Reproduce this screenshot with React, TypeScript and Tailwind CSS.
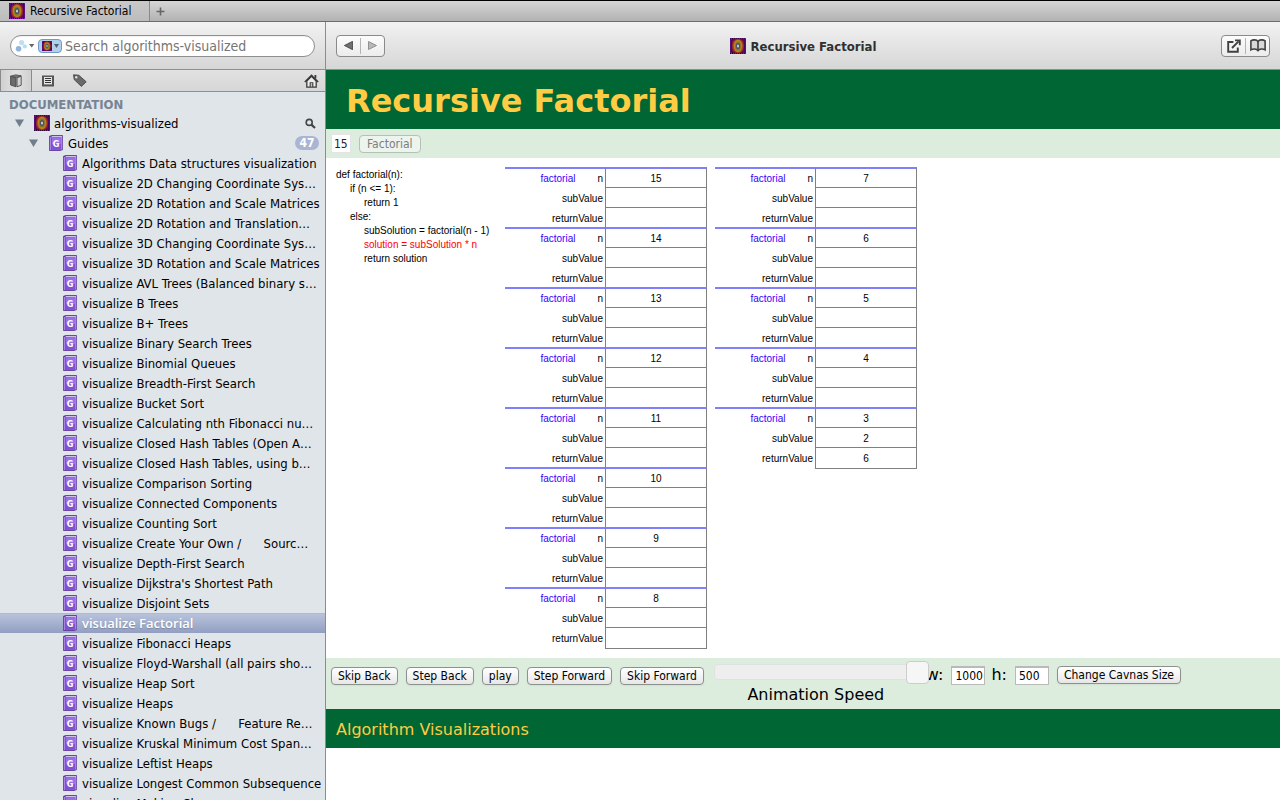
import React from "react";

const guides = [
  "Algorithms Data structures visualization",
  "visualize 2D Changing Coordinate Sys…",
  "visualize 2D Rotation and Scale Matrices",
  "visualize 2D Rotation and Translation…",
  "visualize 3D Changing Coordinate Sys…",
  "visualize 3D Rotation and Scale Matrices",
  "visualize AVL Trees (Balanced binary s…",
  "visualize B Trees",
  "visualize B+ Trees",
  "visualize Binary Search Trees",
  "visualize Binomial Queues",
  "visualize Breadth-First Search",
  "visualize Bucket Sort",
  "visualize Calculating nth Fibonacci nu…",
  "visualize Closed Hash Tables (Open A…",
  "visualize Closed Hash Tables, using b…",
  "visualize Comparison Sorting",
  "visualize Connected Components",
  "visualize Counting Sort",
  "visualize Create Your Own /      Sourc…",
  "visualize Depth-First Search",
  "visualize Dijkstra's Shortest Path",
  "visualize Disjoint Sets",
  "visualize Factorial",
  "visualize Fibonacci Heaps",
  "visualize Floyd-Warshall (all pairs sho…",
  "visualize Heap Sort",
  "visualize Heaps",
  "visualize Known Bugs /      Feature Re…",
  "visualize Kruskal Minimum Cost Span…",
  "visualize Leftist Heaps",
  "visualize Longest Common Subsequence",
  "visualize Making Change",
];

const selectedGuide = "visualize Factorial";

type Frame = { n: number; subValue?: number; returnValue?: number };

const stacks: Frame[][] = [
  [{ n: 15 }, { n: 14 }, { n: 13 }, { n: 12 }, { n: 11 }, { n: 10 }, { n: 9 }, { n: 8 }],
  [{ n: 7 }, { n: 6 }, { n: 5 }, { n: 4 }, { n: 3, subValue: 2, returnValue: 6 }],
];

function FractalIcon({ className = "size-4" }: { className?: string }) {
  return (
    <svg viewBox="0 0 16 16" className={`shrink-0 ${className}`} aria-hidden="true">
      <rect width="16" height="16" fill="#2a0636" />
      <rect x="0.8" y="0.8" width="14.4" height="14.4" fill="none" stroke="#8a12b8" strokeWidth="1.6" strokeDasharray="1 1" />
      <rect x="2" y="1.2" width="12" height="13.6" rx="3" fill="#7a1640" />
      <ellipse cx="8" cy="8" rx="5.6" ry="7" fill="#b03a20" />
      <ellipse cx="8" cy="8" rx="4.3" ry="6.2" fill="#b5851c" />
      <ellipse cx="8" cy="8" rx="3" ry="4.6" fill="#7f7a2c" />
      <ellipse cx="8" cy="8" rx="2.1" ry="3.1" fill="#4f4c70" />
      <ellipse cx="8" cy="8" rx="1.1" ry="1.6" fill="#c4ceb8" />
    </svg>
  );
}

function GuideIcon() {
  return (
    <svg viewBox="0 0 14 16" className="h-4 w-[14px] shrink-0" aria-hidden="true">
      <path d="M0.5 1.2 3 0.5h10.5v14.2L11 15.5H0.5z" fill="#6a3fb4" stroke="#5a329c" strokeWidth="0.8" />
      <path d="M3 1.2h10v1H2.2z" fill="#f1ecfa" />
      <path d="M12.4 1.6h0.8v12.6l-0.8 0.6z" fill="#c7b4ea" />
      <path d="M1.4 2v13" stroke="#b79ae6" strokeWidth="0.9" />
      <path d="M2.6 2.6h9.4v12H2.6z" fill="#9a70e4" />
      <path d="M2.6 9H12v5.6H2.6z" fill="#8252d2" />
      <text x="7.2" y="11.8" textAnchor="middle" fontSize="9" fontWeight="700" fill="#fff" fontFamily="DejaVu Sans Condensed, DejaVu Sans, sans-serif">
        G
      </text>
    </svg>
  );
}

function Disclosure() {
  return (
    <svg viewBox="0 0 9 8" className="h-2 w-[9px] shrink-0" aria-hidden="true">
      <path d="M0 0.5h9L4.5 8z" fill="#6f7d8c" />
    </svg>
  );
}

function SidebarTabs() {
  return (
    <div className="flex h-[22px] shrink-0 items-stretch border-b border-[#8e8e8e] bg-linear-to-b from-[#e2e2e2] to-[#d6d6d6]">
      <button
        type="button"
        aria-label="Books"
        className="flex w-8 items-center justify-center border-x border-[#8a8a8a] bg-linear-to-r from-[#d0d0d0] via-[#e2e2e2] to-[#d0d0d0]"
      >
        <svg viewBox="0 0 12 14" className="h-[14px] w-3">
          <path d="M0.6 2.2 6 3.6v9.2L0.6 11z" fill="#6c6c6c" stroke="#4a4a4a" strokeWidth="0.9" />
          <path d="M0.6 2.2 5.6 0.8l5.6 1L6.4 3.4z" fill="#808080" stroke="#4a4a4a" strokeWidth="0.8" />
          <path d="M7 3.8 11.2 2.2v9L7 12.8z" fill="#d4d4d4" stroke="#4a4a4a" strokeWidth="0.9" />
        </svg>
      </button>
      <button type="button" aria-label="Contents" className="flex w-8 items-center justify-center">
        <svg viewBox="0 0 12 12" className="size-3">
          <path d="M0 0.5h12v11H0z" fill="#555555" />
          <path d="M2 2h8v8H2z" fill="#e6e6e6" />
          <path d="M3 3.5h6M3 5.5h6M3 7.5h6" stroke="#333" strokeWidth="1" />
          <path d="M2 9h8v1H2z" fill="#8c8c8c" />
        </svg>
      </button>
      <button type="button" aria-label="Bookmarks" className="flex w-8 items-center justify-center">
        <svg viewBox="0 0 14 13" className="h-[13px] w-[14px]">
          <path d="M0.5 0.8 5.8 1.2 13.2 7.8 8.4 12.4 1.2 5.6z" fill="#6a6a6a" stroke="#3c3c3c" strokeWidth="0.8" />
          <circle cx="3.2" cy="3.2" r="1.2" fill="#dcdcdc" />
        </svg>
      </button>
      <button type="button" aria-label="Home" className="ml-auto flex w-7 items-center justify-center">
        <svg viewBox="0 0 15 14" className="h-[14px] w-[15px]" fill="none" stroke="#3a3a3a">
          <path d="M2.8 7v6.2h9.4V7L7.5 2.4z" fill="#ececec" strokeWidth="1.3" />
          <path d="M0.8 8 7.5 1.4 14.2 8" strokeWidth="1.5" />
          <path d="M11.4 4.4V1" strokeWidth="1.8" />
          <path d="M6.2 13V8.8h2.6V13" strokeWidth="1.1" />
          <path d="M8 10.4v1" strokeWidth="1" />
        </svg>
      </button>
    </div>
  );
}

function Sidebar() {
  return (
    <aside className="flex w-[326px] shrink-0 flex-col border-r border-[#8c8c8c] bg-[#e0e5e9]">
      <div className="flex h-12 shrink-0 items-center border-b border-[#8e8e8e] bg-linear-to-b from-[#f2f2f2] to-[#d6d6d6] px-[10px]">
        <div className="flex h-[22px] grow items-center rounded-full border border-[#8f8f8f] bg-white pl-1 inset-shadow-2xs">
          <svg viewBox="0 0 20 14" className="h-[14px] w-5 shrink-0" aria-hidden="true">
            <circle cx="3.6" cy="9.8" r="2.8" fill="#8fb4de" />
            <circle cx="6.6" cy="3.6" r="2.6" fill="#c2def3" />
            <circle cx="9.8" cy="7.4" r="2.1" fill="#b5e0ee" />
            <path d="M14 5h5.4L16.7 8.6z" fill="#666" />
          </svg>
          <span className="mx-[3px] flex h-[14px] w-6 shrink-0 items-center gap-[2px] rounded-sm border border-[#6e9bc8] bg-[#b4cfec] px-[3px]">
            <FractalIcon className="size-[10px]" />
            <svg viewBox="0 0 5 4" className="h-1 w-[5px] shrink-0" aria-hidden="true">
              <path d="M0 0h5L2.5 4z" fill="#4d6076" />
            </svg>
          </span>
          <input
            type="search"
            aria-label="Search algorithms-visualized"
            placeholder="Search algorithms-visualized"
            className="min-w-0 grow bg-transparent text-[14px] leading-5 outline-none placeholder:text-[#757575]"
          />
        </div>
      </div>
      <SidebarTabs />
      <nav aria-label="Documentation" className="min-h-0 grow overflow-hidden pt-px text-[13px] leading-5 text-black">
        <h2 className="h-5 px-[9px] text-[13px] leading-6 font-bold text-[#768494]">DOCUMENTATION</h2>
        <div className="flex h-5 items-center pr-[9px] pl-[15px]">
          <Disclosure />
          <FractalIcon className="mr-1 ml-[10px] size-4" />
          <span className="grow pt-[2px]">algorithms-visualized</span>
          <svg viewBox="0 0 11 11" className="size-[11px]" fill="none" stroke="#444" aria-hidden="true">
            <circle cx="4.2" cy="4.4" r="3" strokeWidth="1.6" />
            <path d="M6.4 6.6 10 10" strokeWidth="2.2" />
          </svg>
        </div>
        <div className="flex h-5 items-center pr-[6px] pl-[29px]">
          <Disclosure />
          <span className="mr-[5px] ml-[11px] flex">
            <GuideIcon />
          </span>
          <span className="grow pt-[2px]">Guides</span>
          <span className="flex h-[14px] w-6 items-center justify-center rounded-full bg-[#a9b5d3] text-[12px] font-bold text-white">47</span>
        </div>
        <ul>
          {guides.map((guide) => (
            <li key={guide}>
              <a
                href="#guide"
                aria-current={guide === selectedGuide ? "page" : undefined}
                className={
                  guide === selectedGuide
                    ? "flex h-5 items-center gap-[5px] bg-linear-to-b from-[#bac4de] to-[#929fc1] pl-[63px] font-['Open_Sans',sans-serif] font-semibold whitespace-pre text-white inset-shadow-2xs text-shadow-xs"
                    : "flex h-5 items-center gap-[5px] pl-[63px] whitespace-pre"
                }
              >
                <GuideIcon />
                <span className={guide === selectedGuide ? "" : "pt-[2px]"}>{guide}</span>
              </a>
            </li>
          ))}
        </ul>
      </nav>
    </aside>
  );
}

function FrameStack({ frames }: { frames: Frame[] }) {
  return (
    <table className="w-[202px] table-fixed border-separate border-spacing-0 text-[10px] leading-4">
      <colgroup>
        <col className="w-[100px]" />
        <col className="w-[102px]" />
      </colgroup>
      {frames.map((frame, i) => {
        const last = i === frames.length - 1;
        return (
          <tbody key={frame.n}>
            <tr className="h-5 align-top">
              <th scope="row" className="border-t-2 border-[#8080ff] p-0 pt-[2px] pr-[2px] text-right font-normal">
                <span className="mr-[22px] text-[#3300ff]">factorial</span>n
              </th>
              <td className="border-x border-t-2 border-x-[#808080] border-t-[#8080ff] p-0 pt-[2px] text-center">{frame.n}</td>
            </tr>
            <tr className="h-5 align-top">
              <th scope="row" className="p-0 pt-1 pr-[2px] text-right font-normal">subValue</th>
              <td className="border-x border-t border-[#808080] p-0 pt-[3px] text-center">{frame.subValue}</td>
            </tr>
            <tr className={last ? "h-[22px] align-top" : "h-5 align-top"}>
              <th scope="row" className="p-0 pt-1 pr-[2px] text-right font-normal">returnValue</th>
              <td
                className={
                  last
                    ? "border border-[#808080] p-0 pt-[3px] text-center"
                    : "border-x border-t border-[#808080] p-0 pt-[3px] text-center"
                }
              >
                {frame.returnValue}
              </td>
            </tr>
          </tbody>
        );
      })}
    </table>
  );
}

function PushButton({ children }: { children: React.ReactNode }) {
  return (
    <button
      type="button"
      className="h-[18px] shrink-0 rounded border border-[#8b918c] bg-linear-to-b from-white via-[#f4f4f4] to-[#e6e6e6] px-[6px] text-[12px] leading-4 whitespace-nowrap shadow-xs"
    >
      {children}
    </button>
  );
}

function SizeField({ id, label, value }: { id: string; label: string; value: string }) {
  return (
    <div className="flex items-center gap-2">
      <label htmlFor={id} className="font-['DejaVu_Sans',sans-serif] text-[16px] leading-5">
        {label}
      </label>
      <input
        id={id}
        defaultValue={value}
        className="h-[19px] w-[34px] border border-t-2 border-[#b9b9b9] bg-white pl-[3px] text-[12px] leading-4 outline-none"
      />
    </div>
  );
}

function Controls() {
  return (
    <div className="flex h-[51px] shrink-0 items-start bg-[#dcecdd] pl-[5px]">
      <div className="flex gap-2 pt-[9px]">
        <PushButton>Skip Back</PushButton>
        <PushButton>Step Back</PushButton>
        <PushButton>play</PushButton>
        <PushButton>Step Forward</PushButton>
        <PushButton>Skip Forward</PushButton>
      </div>
      <div className="relative z-10 ml-[10px] flex w-[204px] shrink-0 flex-col items-center pt-[2px] font-['DejaVu_Sans',sans-serif]">
        <input
          id="speed"
          type="range"
          defaultValue={100}
          className="h-[23px] w-[216px] shrink-0 appearance-none self-start bg-transparent [&::-webkit-slider-runnable-track]:h-4 [&::-webkit-slider-runnable-track]:rounded [&::-webkit-slider-runnable-track]:border [&::-webkit-slider-runnable-track]:border-[#dfe3df] [&::-webkit-slider-runnable-track]:bg-[#eeeeee] [&::-webkit-slider-thumb]:-mt-1 [&::-webkit-slider-thumb]:h-[23px] [&::-webkit-slider-thumb]:w-[23px] [&::-webkit-slider-thumb]:appearance-none [&::-webkit-slider-thumb]:rounded [&::-webkit-slider-thumb]:border [&::-webkit-slider-thumb]:border-[#cccccc] [&::-webkit-slider-thumb]:bg-[#f6f6f6]"
        />
        <label htmlFor="speed" className="text-[16px] leading-6 whitespace-nowrap">
          Animation Speed
        </label>
      </div>
      <div className="ml-2 flex items-center gap-[6px] pt-[7px]">
        <SizeField id="canvas-width" label="w:" value="1000" />
        <SizeField id="canvas-height" label="h:" value="500" />
        <div className="ml-[2px] flex">
          <PushButton>Change Cavnas Size</PushButton>
        </div>
      </div>
    </div>
  );
}

function Toolbar() {
  return (
    <div className="flex h-12 shrink-0 items-center border-b border-[#8e8e8e] bg-linear-to-b from-[#f2f2f2] to-[#d6d6d6] px-[10px]">
      <div className="flex flex-1">
        <div className="flex h-[22px] w-[49px] items-center rounded border border-[#8a8a8a] bg-linear-to-b from-[#fcfcfc] to-[#ececec]">
          <button type="button" aria-label="Back" className="flex h-4 flex-1 items-center justify-center border-r border-[#b4b4b4]">
            <svg viewBox="0 0 9 9" className="size-[9px]">
              <path d="M8.6 0.3v8.4L0.4 4.5z" fill="#707070" stroke="#3c3c3c" strokeWidth="0.8" />
            </svg>
          </button>
          <button type="button" aria-label="Forward" className="flex h-4 flex-1 items-center justify-center">
            <svg viewBox="0 0 9 9" className="size-[9px]">
              <path d="M0.5 0.5v8l8-4z" fill="#b8b8b8" stroke="#8a8a8a" strokeWidth="0.9" />
            </svg>
          </button>
        </div>
      </div>
      <div className="flex items-center gap-[5px] text-[13px] leading-5 font-bold text-[#303030]">
        <FractalIcon />
        <span className="pt-[2px]">Recursive Factorial</span>
      </div>
      <div className="flex flex-1 justify-end">
        <div className="flex h-[22px] w-[49px] items-center rounded border border-[#8a8a8a] bg-linear-to-b from-[#fcfcfc] to-[#ececec]">
          <button type="button" aria-label="Open in browser" className="flex h-4 flex-1 items-center justify-center border-r border-[#b4b4b4]">
            <svg viewBox="0 0 14 14" className="size-[14px]" fill="none" stroke="#404040" strokeWidth="1.9">
              <path d="M6.4 3H1.2v9.8h9.6V8.4" />
              <path d="M5 9 11.6 2.4" />
              <path d="M8 1.4h4.8v4.8" />
            </svg>
          </button>
          <button type="button" aria-label="Reader" className="flex h-4 flex-1 items-center justify-center">
            <svg viewBox="0 0 16 13" className="h-[13px] w-4" fill="#d8d8d8" stroke="#404040" strokeWidth="1.6">
              <path d="M8 2.4C6.6 0.6 3 0.4 0.9 1.8v9C3 9.6 6.6 9.6 8 11.6c1.4-2 5-2 7.1-0.8v-9C13 0.4 9.4 0.6 8 2.4z" />
              <path d="M8 2.4v9.4" />
            </svg>
          </button>
        </div>
      </div>
    </div>
  );
}

export default function App() {
  return (
    <div className="flex h-screen flex-col overflow-hidden bg-white font-['DejaVu_Sans_Condensed','DejaVu_Sans',sans-serif] text-black">
      <div className="flex h-[22px] shrink-0 items-stretch border-t border-b border-t-black border-b-[#6c6c6c] bg-linear-to-b from-[#d6d6d6] to-[#b2b2b2]">
        <button
          type="button"
          className="flex w-[150px] items-center gap-[5px] border-r border-[#8a8a8a] bg-linear-to-b from-[#c9c9c9] to-[#bcbcbc] pl-[9px] text-[12px] leading-5"
        >
          <FractalIcon />
          Recursive Factorial
        </button>
        <button type="button" aria-label="New tab" className="flex w-5 items-center justify-center">
          <svg viewBox="0 0 9 9" className="size-[9px]">
            <path d="M4.5 0.5v8M0.5 4.5h8" stroke="#666" strokeWidth="1.6" />
          </svg>
        </button>
      </div>
      <div className="flex min-h-0 grow">
        <Sidebar />
        <main className="flex min-w-0 grow flex-col">
          <Toolbar />
          <h1 className="flex h-[59px] shrink-0 items-center bg-[#006633] pt-[2px] pl-5 font-['DejaVu_Sans',sans-serif] text-[32px] font-bold whitespace-nowrap text-[#ffcc44]">
            Recursive Factorial
          </h1>
          <div className="flex h-[29px] shrink-0 items-center gap-2 bg-[#dcecdd] pl-[5px]">
            <input
              aria-label="Factorial argument"
              defaultValue="15"
              className="h-[19px] w-5 border border-[#e4e4e4] bg-white pl-[2px] text-[12px] leading-4 text-[#222] outline-none"
            />
            <button
              type="button"
              disabled
              className="h-[18px] rounded border border-[#b4c2b5] bg-[#edf3ed] px-[7px] text-[12px] leading-4 text-[#7c807c]"
            >
              Factorial
            </button>
          </div>
          <div className="flex h-[500px] shrink-0 items-start gap-2 pt-[9px] pl-[10px] font-['Liberation_Sans',Arial,sans-serif]">
            <pre className="w-[161px] pt-px font-['Liberation_Sans',Arial,sans-serif] text-[10px] leading-[14px]">
              <code className="flex flex-col font-['Liberation_Sans',Arial,sans-serif]">
                <span>def factorial(n):</span>
                <span className="pl-[14px]">if (n &lt;= 1):</span>
                <span className="pl-7">return 1</span>
                <span className="pl-[14px]">else:</span>
                <span className="pl-7">subSolution = factorial(n - 1)</span>
                <span className="pl-7 text-[#ff0000]">solution = subSolution * n</span>
                <span className="pl-7">return solution</span>
              </code>
            </pre>
            {stacks.map((frames) => (
              <FrameStack key={frames[0].n} frames={frames} />
            ))}
          </div>
          <Controls />
          <footer className="flex h-[39px] shrink-0 items-center bg-[#006633] pt-[2px] pl-[10px] font-['DejaVu_Sans',sans-serif] text-[16px] text-[#ffcc44]">
            <a href="#home">Algorithm Visualizations</a>
          </footer>
        </main>
      </div>
    </div>
  );
}
